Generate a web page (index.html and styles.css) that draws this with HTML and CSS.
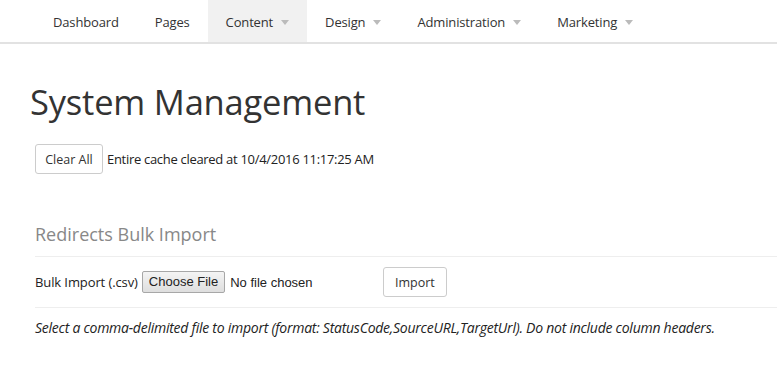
FILE: index.html
```html
<!DOCTYPE html>
<html>
<head>
<meta charset="utf-8">
<link rel="stylesheet" href="styles.css">
</head>
<body>
<nav class="topnav">
  <ul class="menu">
    <li class="item"><span class="label">Dashboard</span></li>
    <li class="item"><span class="label">Pages</span></li>
    <li class="item active"><span class="label">Content</span><span class="caret"></span></li>
    <li class="item"><span class="label">Design</span><span class="caret"></span></li>
    <li class="item"><span class="label">Administration</span><span class="caret"></span></li>
    <li class="item"><span class="label">Marketing</span><span class="caret"></span></li>
  </ul>
</nav>
<main class="page">
  <h1 class="title">System Management</h1>
  <div class="cache-row">
    <button class="btn btn-clear">Clear All</button>
    <span class="cache-msg">Entire cache cleared at 10/4/2016 11:17:25 AM</span>
  </div>
  <section class="import">
    <h2 class="section-title">Redirects Bulk Import</h2>
    <div class="import-row">
      <span class="field-label">Bulk Import (.csv)</span>
      <span class="file-input"><span class="file-btn">Choose File</span><span class="file-name">No file chosen</span></span>
      <button class="btn btn-import">Import</button>
    </div>
    <p class="hint">Select a comma-delimited file to import (format: StatusCode,SourceURL,TargetUrl). Do not include column headers.</p>
  </section>
</main>
</body>
</html>
```

FILE: styles.css
```css
html, body {
  margin: 0;
  padding: 0;
  background: #fff;
  font-family: "Open Sans", "Liberation Sans", sans-serif;
  color: #333;
}

.topnav {
  height: 42px;
  border-bottom: 2px solid #e2e2e2;
  padding-left: 35px;
}

.menu {
  display: flex;
  list-style: none;
  margin: 0;
  padding: 0;
  height: 42px;
}

.item {
  display: flex;
  align-items: center;
  padding: 2px 18px 0;
  font-size: 13px;
  letter-spacing: -0.15px;
  color: #333;
}

.item.active {
  background: #f1f1f1;
}

.caret {
  width: 0;
  height: 0;
  margin-left: 8px;
  border-left: 4px solid transparent;
  border-right: 4px solid transparent;
  border-top: 5px solid #bbb;
  margin-top: 1px;
}

.page {
  padding: 0 0 0 35px;
}

.title {
  font-size: 34.5px;
  font-weight: 400;
  margin: 0 0 0 -5px;
  padding-top: 34px;
  line-height: 48px;
  color: #333;
  letter-spacing: -0.2px;
}

.cache-row {
  display: flex;
  align-items: center;
  margin-top: 18px;
  gap: 4px;
}

.btn {
  font-family: "Open Sans", "Liberation Sans", sans-serif;
  font-size: 12.5px;
  color: #333;
  background: #fff;
  border: 1px solid #ccc;
  border-radius: 3px;
  height: 30px;
  padding: 0 10px;
  margin: 0;
}

.btn-clear {
  width: 68px;
  padding: 0;
}

.cache-msg {
  font-size: 13px;
  letter-spacing: -0.3px;
  color: #222;
}

.import {
  margin-top: 48px;
}

.section-title {
  font-size: 18px;
  font-weight: 400;
  color: #888;
  margin: 0;
  line-height: 25px;
  padding-bottom: 9px;
  border-bottom: 1px solid #eee;
}

.import-row {
  display: flex;
  align-items: center;
  height: 50px;
  border-bottom: 1px solid #eee;
}

.field-label {
  font-size: 13px;
  letter-spacing: -0.1px;
  color: #222;
  margin-right: 4px;
}

.file-input {
  display: flex;
  align-items: center;
  width: 241px;
}

.file-btn {
  font-family: "Liberation Sans", Arial, sans-serif;
  font-size: 13px;
  color: #222;
  background: linear-gradient(#f4f4f4, #dedede);
  border: 1px solid #a7a7a7;
  border-radius: 2px;
  height: 20px;
  line-height: 20px;
  padding: 0 6px;
}

.file-name {
  font-family: "Liberation Sans", Arial, sans-serif;
  font-size: 13px;
  color: #222;
  margin-left: 5px;
}

.btn-import {
  width: 64px;
  padding: 0;
}

.hint {
  font-size: 14px;
  font-style: italic;
  letter-spacing: -0.25px;
  color: #222;
  margin: 10px 0 0 0;
}
```
